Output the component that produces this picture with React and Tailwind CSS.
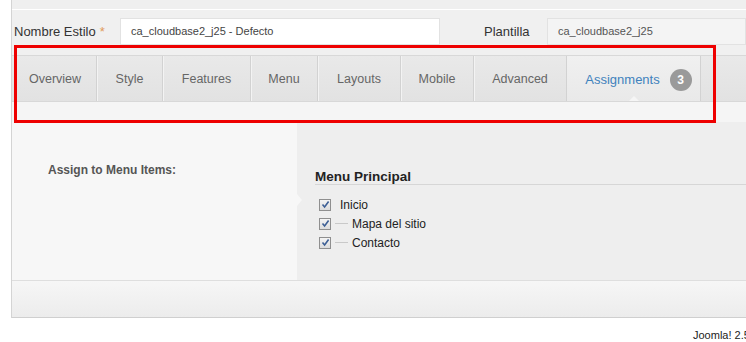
import React from "react";

const tabs = [
  { label: "Overview", w: 83 },
  { label: "Style", w: 66 },
  { label: "Features", w: 88 },
  { label: "Menu", w: 67 },
  { label: "Layouts", w: 83 },
  { label: "Mobile", w: 73 },
  { label: "Advanced", w: 93 },
];

function Check() {
  return (
    <span className="relative inline-flex h-[12px] w-[12px] items-center justify-center border border-[#8f8f8f] bg-gradient-to-b from-[#f4f4f4] to-[#dcdcdc]">
      <svg width="9" height="9" viewBox="0 0 9 9">
        <path d="M1.5 4.5 L3.6 7 L7.6 1.5" fill="none" stroke="#3d5f95" strokeWidth="1.6" />
      </svg>
    </span>
  );
}

export default function App() {
  return (
    <div className="relative h-[342px] w-[746px] overflow-hidden bg-white" style={{ fontFamily: '"Liberation Sans", Arial, sans-serif' }}>
      <div className="ml-[11px] flex h-[318px] flex-col border-l border-[#d4d4d4]">
        {/* top band */}
        <div className="h-[10px] border-b border-white bg-[#efefef]" />
        {/* form row */}
        <div className="flex h-[45px] items-start bg-[#f0f0f0] pt-[8px]">
          <div className="flex h-[27px] w-[108px] items-center pl-[2px] text-[13px] text-[#333]">
            Nombre Estilo <span className="ml-[4px] text-[#e09a5a]">*</span>
          </div>
          <div className="flex h-[27px] w-[320px] items-center border border-[#e2e2e2] bg-white pl-[10px] text-[11px] text-[#444]">
            ca_cloudbase2_j25 - Defecto
          </div>
          <div className="flex h-[27px] w-[107px] items-center pl-[44px] text-[13px] text-[#333]">Plantilla</div>
          <div className="flex h-[27px] flex-1 items-center border border-[#e2e2e2] bg-[#f4f4f4] pl-[10px] text-[11px] text-[#555]">
            ca_cloudbase2_j25
          </div>
        </div>
        {/* tabs bar */}
        <div className="flex h-[46px] border-t border-[#d8d8d8] bg-gradient-to-b from-[#e9e9e9] to-[#e2e2e2] pl-[2px]">
          {tabs.map((t) => (
            <div
              key={t.label}
              className="flex items-center justify-center border-r border-[#d2d2d2] pt-[2px] text-[12.5px] text-[#666] shadow-[1px_0_0_#f3f3f3]"
              style={{ width: t.w }}
            >
              {t.label}
            </div>
          ))}
          <div className="relative flex w-[134px] items-center justify-center gap-[10px] border-r border-[#d2d2d2] bg-gradient-to-b from-[#f0f0f0] to-[#e9e9e9] pl-[10px] pt-[2px] text-[13px] text-[#3f82bd]">
            Assignments
            <span className="flex h-[22px] w-[22px] items-center justify-center rounded-full bg-[#9a9a9a] text-[12px] font-bold text-white">3</span>
            <span className="absolute bottom-0 left-[62px] h-0 w-0 border-x-[5px] border-b-[5px] border-x-transparent border-b-[#f5f5f5]" />
          </div>
        </div>
        {/* strip under tabs */}
        <div className="h-[21px] border-t border-[#d8d8d8] bg-[#f5f5f5]" />
        {/* content */}
        <div className="flex h-[158px]">
          <div className="w-[285px] bg-[#f7f7f7] pl-[36px] pt-[39px] text-[12px] font-bold text-[#555]">Assign to Menu Items:</div>
          <div className="relative flex-1 bg-[#eeeeee] pl-[18px] pt-[47px]">
            <span className="absolute left-0 top-[72px] h-0 w-0 border-y-[6px] border-l-[5px] border-y-transparent border-l-[#f7f7f7]" />
            <div className="border-b border-[#d6d6d6] text-[13.5px] font-bold leading-[15px] text-[#222]">Menu Principal</div>
            <div className="mt-[13px] flex flex-col gap-[6px] pl-[4px] text-[12px] text-[#222]">
              <div className="flex h-[13px] items-center gap-[9px]">
                <Check />
                <span>Inicio</span>
              </div>
              <div className="flex h-[13px] items-center">
                <Check />
                <span className="ml-[4px] mr-[4px] h-px w-[13px] bg-[#c9c9c9]" />
                <span>Mapa del sitio</span>
              </div>
              <div className="flex h-[13px] items-center">
                <Check />
                <span className="ml-[4px] mr-[4px] h-px w-[13px] bg-[#c9c9c9]" />
                <span>Contacto</span>
              </div>
            </div>
          </div>
        </div>
        {/* footer bar */}
        <div className="h-[38px] border-y border-t-[#dedede] border-b-[#cfcfcf] bg-gradient-to-b from-[#f6f6f6] to-[#ececec]" />
      </div>
      <div className="absolute left-[693px] top-[330px] whitespace-nowrap text-[11px] leading-none text-[#222]">Joomla! 2.5</div>
      {/* red annotation box */}
      <div className="pointer-events-none absolute left-[14px] top-[45px] h-[78px] w-[702px] border-[3.5px] border-[#ee0000]" />
    </div>
  );
}
